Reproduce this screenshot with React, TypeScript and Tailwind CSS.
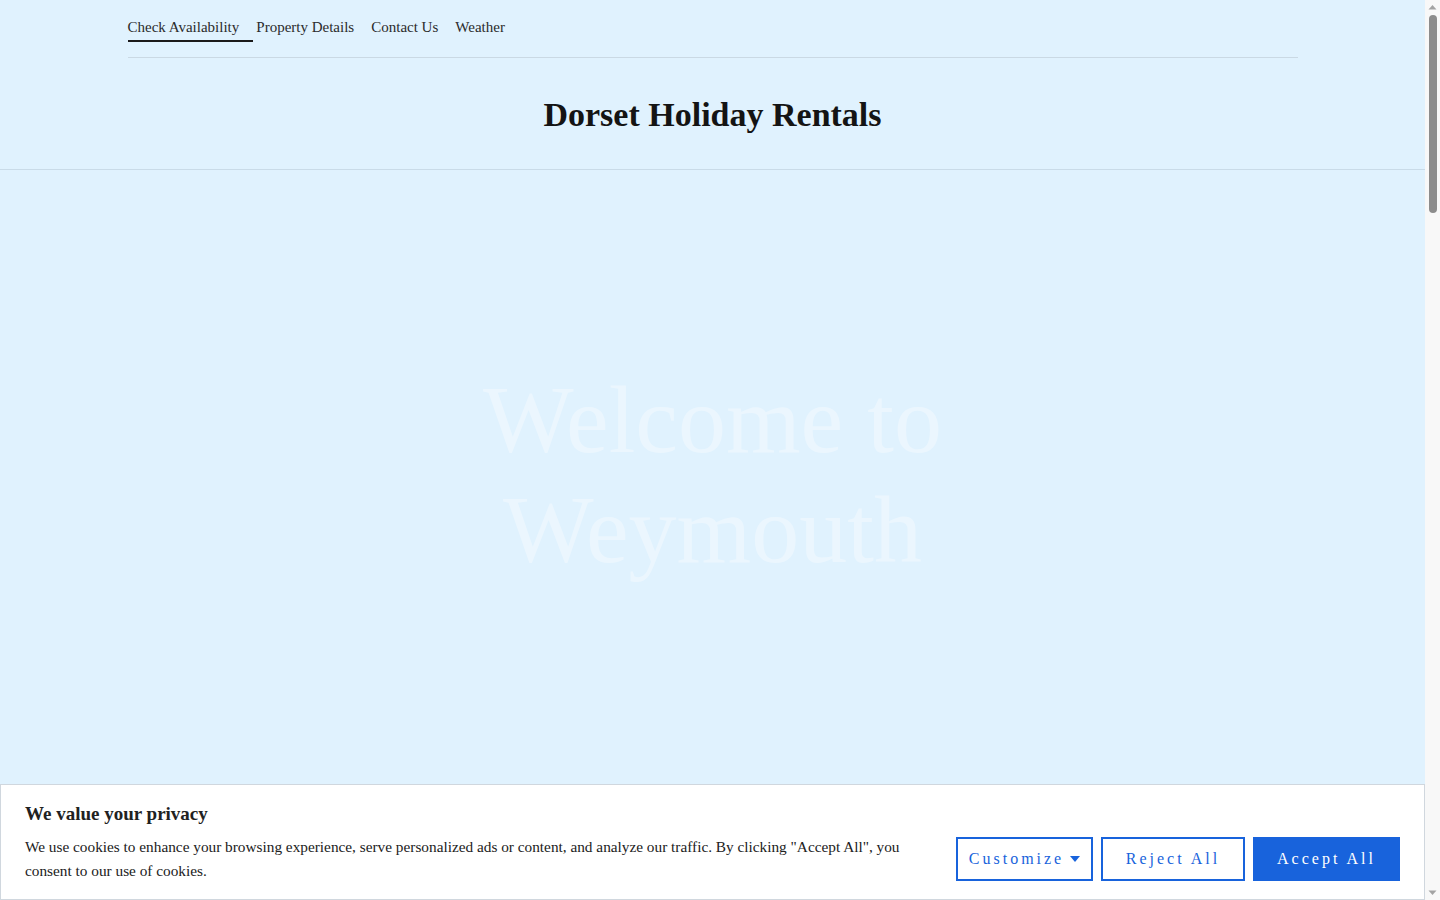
import { useState } from "react";

const serif = "font-['Liberation_Serif',_'Times_New_Roman',_serif]";

const NAV_ITEMS = ["Check Availability", "Property Details", "Contact Us", "Weather"];

function Header() {
  const [active, setActive] = useState(NAV_ITEMS[0]);

  return (
    <header className="border-b border-[#c9dbe8]">
      <div className="mx-auto w-[1170px]">
        <nav className="border-b border-[#cad9e4] pb-[15px] pt-[17px]">
          <div className="flex gap-[3px]">
            {NAV_ITEMS.map((item) => (
              <a
                key={item}
                href="#"
                onClick={(e) => {
                  e.preventDefault();
                  setActive(item);
                }}
                className={`block border-b-2 pb-[3px] pr-[14px] text-[15px] leading-[20px] text-[#2b2b2b] ${
                  active === item ? "border-[#1a1a1a]" : "border-transparent"
                }`}
              >
                {item}
              </a>
            ))}
          </div>
        </nav>
        <div className="pb-[33px] pt-[36px] text-center">
          <h1 className="text-[34px] font-bold leading-[42px] text-[#141414]">Dorset Holiday Rentals</h1>
        </div>
      </div>
    </header>
  );
}

function Hero() {
  return (
    <section className="flex h-[613px] items-center justify-center pb-[4px]">
      <h2 className="w-[560px] text-center text-[96px] leading-[110px] text-white/35">Welcome to Weymouth</h2>
    </section>
  );
}

function CookieBanner() {
  return (
    <div className="fixed bottom-0 left-0 right-[15px] border border-[#d0d7de] bg-white px-6 pb-[16px] pt-[16px]">
      <p className="text-[19px] font-bold leading-[26px] text-[#212121]">We value your privacy</p>
      <div className="mt-[8px] flex items-center justify-between">
        <p className="w-[905px] text-[15.3px] leading-[24px] text-[#212121]">
          We use cookies to enhance your browsing experience, serve personalized ads or content, and analyze our
          traffic. By clicking "Accept All", you consent to our use of cookies.
        </p>
        <div className="flex gap-2">
          <button className="flex h-[44px] w-[137px] items-center justify-center gap-[6px] border-2 border-[#1863dc] text-[16px] tracking-[3px] text-[#1863dc]">
            Customize
            <svg width="10" height="6" viewBox="0 0 10 6" className="fill-[#1863dc]">
              <path d="M0 0h10L5 6z" />
            </svg>
          </button>
          <button className="h-[44px] w-[144px] border-2 border-[#1863dc] text-[16px] tracking-[3px] text-[#1863dc]">
            Reject All
          </button>
          <button className="h-[44px] w-[147px] border-2 border-[#1863dc] bg-[#1863dc] text-[16px] tracking-[3px] text-white">
            Accept All
          </button>
        </div>
      </div>
    </div>
  );
}

// page scrollbar, drawn since the browser hides its own
function ScrollTrack() {
  return (
    <aside className="flex h-screen w-[15px] flex-col items-center bg-[#f8f8f8]">
      <svg width="15" height="15" viewBox="0 0 15 15" className="shrink-0 fill-[#a3a3a3]">
        <path d="M3.5 9.5h8L7.5 5z" />
      </svg>
      <div className="h-[198px] w-[8px] rounded-full bg-[#8c8c8c]" />
      <div className="flex-1" />
      <svg width="15" height="15" viewBox="0 0 15 15" className="shrink-0 fill-[#a3a3a3]">
        <path d="M3.5 5.5h8L7.5 10z" />
      </svg>
    </aside>
  );
}

export default function App() {
  return (
    <div className={`flex h-screen bg-[#e0f2fe] ${serif}`}>
      <main className="h-screen flex-1 overflow-y-auto">
        <Header />
        <Hero />
        <section className="h-[2980px]" />
        <CookieBanner />
      </main>
      <ScrollTrack />
    </div>
  );
}
